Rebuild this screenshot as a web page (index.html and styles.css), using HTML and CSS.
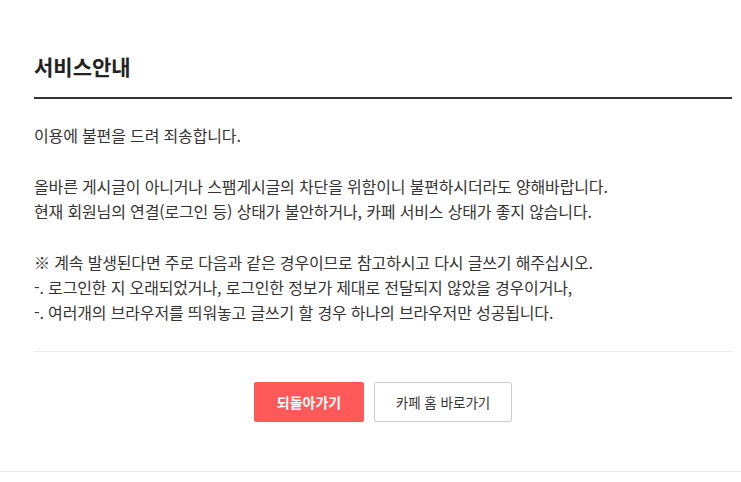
FILE: index.html
```html
<!DOCTYPE html>
<html lang="ko">
<head>
  <meta charset="UTF-8" />
  <title>서비스안내</title>
  <link rel="stylesheet" href="styles.css">
</head>
<body>
  <div class="page">
    <!-- 안내 영역 -->
    <div class="guide">
      <h2 class="guide-title">서비스안내</h2>
      <div class="guide-text">
        <p>이용에 불편을 드려 죄송합니다.</p>
        <p>
          올바른 게시글이 아니거나 스팸게시글의 차단을 위함이니 불편하시더라도 양해바랍니다.<br>
          현재 회원님의 연결(로그인 등) 상태가 불안하거나, 카페 서비스 상태가 좋지 않습니다.
        </p>
        <p>
          ※ 계속 발생된다면 주로 다음과 같은 경우이므로 참고하시고 다시 글쓰기 해주십시오.<br>
          -. 로그인한 지 오래되었거나, 로그인한 정보가 제대로 전달되지 않았을 경우이거나,<br>
          -. 여러개의 브라우저를 띄워놓고 글쓰기 할 경우 하나의 브라우저만 성공됩니다.
        </p>
      </div>
      <!-- 버튼 -->
      <div class="btn-area">
        <a href="#" class="btn btn-back">되돌아가기</a>
        <a href="#" class="btn btn-home">카페 홈 바로가기</a>
      </div>
    </div>
  </div>
</body>
</html>
```

FILE: styles.css
```css
/* 기본 */
body {
  margin: 0;
  padding: 0;
  background: #fff;
  font-family: 'Noto Sans CJK KR', 'Noto Sans', sans-serif;
  color: #333;
}
.page {
  border-bottom: 1px solid #e8e8e8;
  padding-bottom: 49px;
}
.guide {
  margin: 0 9px 0 34px;
}
.guide-title {
  margin: 0;
  padding: 48px 0 13px;
  font-size: 21px;
  line-height: 36px;
  font-weight: bold;
  color: #222;
  border-bottom: 2px solid #333;
}
.guide-text {
  padding: 24px 0 26px;
  border-bottom: 1px solid #ebebeb;
  font-size: 16px;
  letter-spacing: -0.15px;
  line-height: 25px;
}
.guide-text p {
  margin: 0 0 26px;
}
.guide-text p:last-child {
  margin-bottom: 0;
}
.btn-area {
  display: flex;
  justify-content: center;
  gap: 10px;
  padding-top: 30px;
}
.btn {
  display: flex;
  align-items: center;
  justify-content: center;
  height: 40px;
  box-sizing: border-box;
  border-radius: 2px;
  font-size: 14px;
  text-decoration: none;
}
.btn-back {
  width: 110px;
  background-color: #ff5959;
  color: #fff;
  font-weight: bold;
}
.btn-home {
  width: 138px;
  border: 1px solid #ccc;
  background-color: #fff;
  color: #333;
  font-size: 13.5px;
}
```
